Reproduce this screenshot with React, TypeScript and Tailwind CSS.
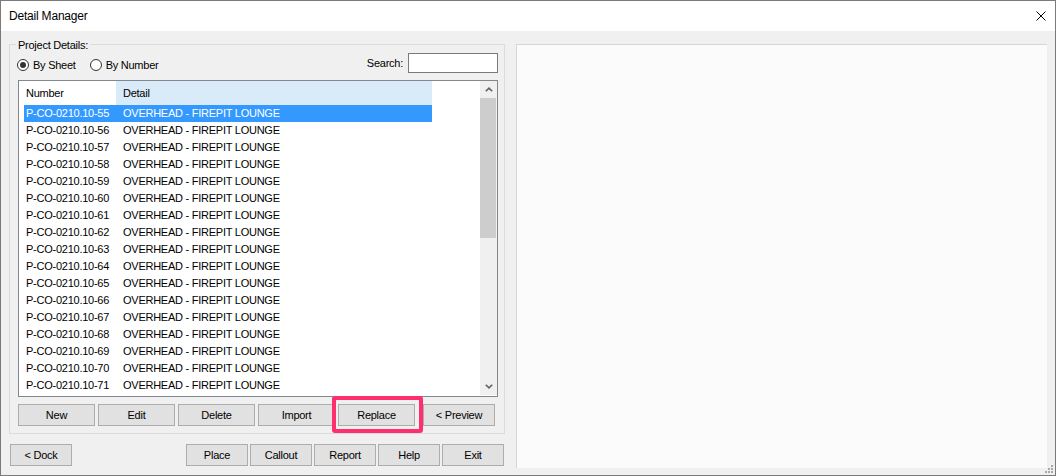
import React from 'react';

const rows = Array.from({ length: 17 }, (_, i) => `P-CO-0210.10-${55 + i}`);

function Btn({ label, w = 'w-[77px]' }: { label: string; w?: string }) {
  return (
    <button className={`${w} h-[22px] border border-[#adadad] bg-[#e1e1e1] text-[11px] tracking-[-0.25px] text-black flex items-center justify-center`}>
      {label}
    </button>
  );
}

function Radio({ checked, label }: { checked?: boolean; label: string }) {
  return (
    <label className="flex items-center gap-[4px]">
      <span className="w-[12px] h-[12px] rounded-full border border-[#333] bg-white flex items-center justify-center">
        {checked && <span className="w-[6px] h-[6px] rounded-full bg-[#333]" />}
      </span>
      <span>{label}</span>
    </label>
  );
}

function Chevron({ up }: { up?: boolean }) {
  return (
    <svg width="8" height="5" viewBox="0 0 8 5" className={up ? '' : 'rotate-180'}>
      <polyline points="0.8,4.3 4,1.2 7.2,4.3" fill="none" stroke="#606060" strokeWidth="1.6" />
    </svg>
  );
}

export default function App() {
  return (
    <div className="relative w-[1056px] h-[476px] border border-[#7a7a7a] flex flex-col overflow-hidden text-[11px] tracking-[-0.25px] text-black font-['Liberation_Sans',Arial,sans-serif]">
      {/* title bar */}
      <div className="h-[30px] shrink-0 bg-white flex items-center justify-between pl-[8px] pr-[9px]">
        <span className="text-[12px] tracking-[-0.2px]">Detail Manager</span>
        <svg width="10" height="10" viewBox="0 0 10 10">
          <path d="M0.5 0.5 L9.5 9.5 M9.5 0.5 L0.5 9.5" stroke="#000" strokeWidth="1" />
        </svg>
      </div>

      <div className="flex-1 bg-[#f0f0f0] flex gap-[11px] pt-[13px] pl-[8px] pr-[8px] pb-[7px]">
        {/* left column */}
        <div className="w-[496px] flex flex-col">
          <div className="relative h-[390px] border border-[#dcdcdc] pt-[8px] pl-[8px] pr-[6px] pb-[7px] flex flex-col">
            <span className="absolute -top-[7px] left-[6px] px-[2px] leading-[14px] bg-[#f0f0f0]">Project Details:</span>

            <div className="h-[20px] flex items-start justify-between">
              <div className="mt-[6px] -ml-[1px] h-[12px] flex items-center gap-[14px]">
                <Radio checked label="By Sheet" />
                <Radio label="By Number" />
              </div>
              <div className="flex items-center gap-[5px]">
                <span>Search:</span>
                <input className="w-[90px] h-[20px] border border-[#7a7a7a] bg-white outline-none" />
              </div>
            </div>

            {/* list */}
            <div className="mt-[7px] h-[317px] border border-[#828790] bg-white flex">
              <div className="flex-1 flex flex-col">
                <div className="h-[24px] flex shrink-0">
                  <div className="w-[97px] pl-[7px] flex items-center">Number</div>
                  <div className="w-[316px] pl-[7px] flex items-center bg-[#d9ebf9]">Detail</div>
                </div>
                <div className="ml-[5px] w-[408px]">
                  {rows.map((n, i) => (
                    <div
                      key={n}
                      className={`h-[17px] flex items-center ${i === 0 ? 'bg-[#3399ff] text-white' : ''}`}
                    >
                      <span className="w-[92px] pl-[2px]">{n}</span>
                      <span className="pl-[7px]">OVERHEAD - FIREPIT LOUNGE</span>
                    </div>
                  ))}
                </div>
              </div>
              {/* scrollbar */}
              <div className="w-[17px] mb-[1px] bg-[#f0f0f0] flex flex-col">
                <div className="h-[17px] flex items-center justify-center">
                  <Chevron up />
                </div>
                <div className="h-[140px] mr-[1px] bg-[#cdcdcd]" />
                <div className="flex-1" />
                <div className="h-[17px] flex items-center justify-center">
                  <Chevron />
                </div>
              </div>
            </div>

            <div className="mt-[7px] flex">
              <div className="flex gap-[3px]">
                <Btn label="New" />
                <Btn label="Edit" />
                <Btn label="Delete" />
                <Btn label="Import" />
                <div className="relative">
                  <Btn label="Replace" />
                  <div className="absolute left-[-6px] top-[-8px] right-[-8px] bottom-[-7px] border-[4px] border-[#ff2e6e] rounded-[3px] z-10" />
                </div>
              </div>
              <div className="ml-[8px]">
                <Btn label="< Preview" w="w-[72px]" />
              </div>
            </div>
          </div>

          <div className="mt-[10px] flex justify-between">
            <div className="ml-[1px]">
              <Btn label="< Dock" w="w-[62px]" />
            </div>
            <div className="mr-[1px] flex gap-[2px]">
              <Btn label="Place" w="w-[62px]" />
              <Btn label="Callout" w="w-[62px]" />
              <Btn label="Report" w="w-[62px]" />
              <Btn label="Help" w="w-[62px]" />
              <Btn label="Exit" w="w-[62px]" />
            </div>
          </div>
        </div>

        {/* preview panel */}
        <div className="flex-1 bg-[#fbfbfb] border-t border-l border-[#d6d6d6]" />
      </div>

      {/* resize grip */}
      <svg width="9" height="9" viewBox="0 0 9 9" className="absolute right-[1px] bottom-[1px]">
        <rect x="6" y="0" width="2" height="2" fill="#a8a8a8" />
        <rect x="3" y="3" width="2" height="2" fill="#a8a8a8" />
        <rect x="6" y="3" width="2" height="2" fill="#a8a8a8" />
        <rect x="0" y="6" width="2" height="2" fill="#a8a8a8" />
        <rect x="3" y="6" width="2" height="2" fill="#a8a8a8" />
        <rect x="6" y="6" width="2" height="2" fill="#a8a8a8" />
      </svg>
    </div>
  );
}
